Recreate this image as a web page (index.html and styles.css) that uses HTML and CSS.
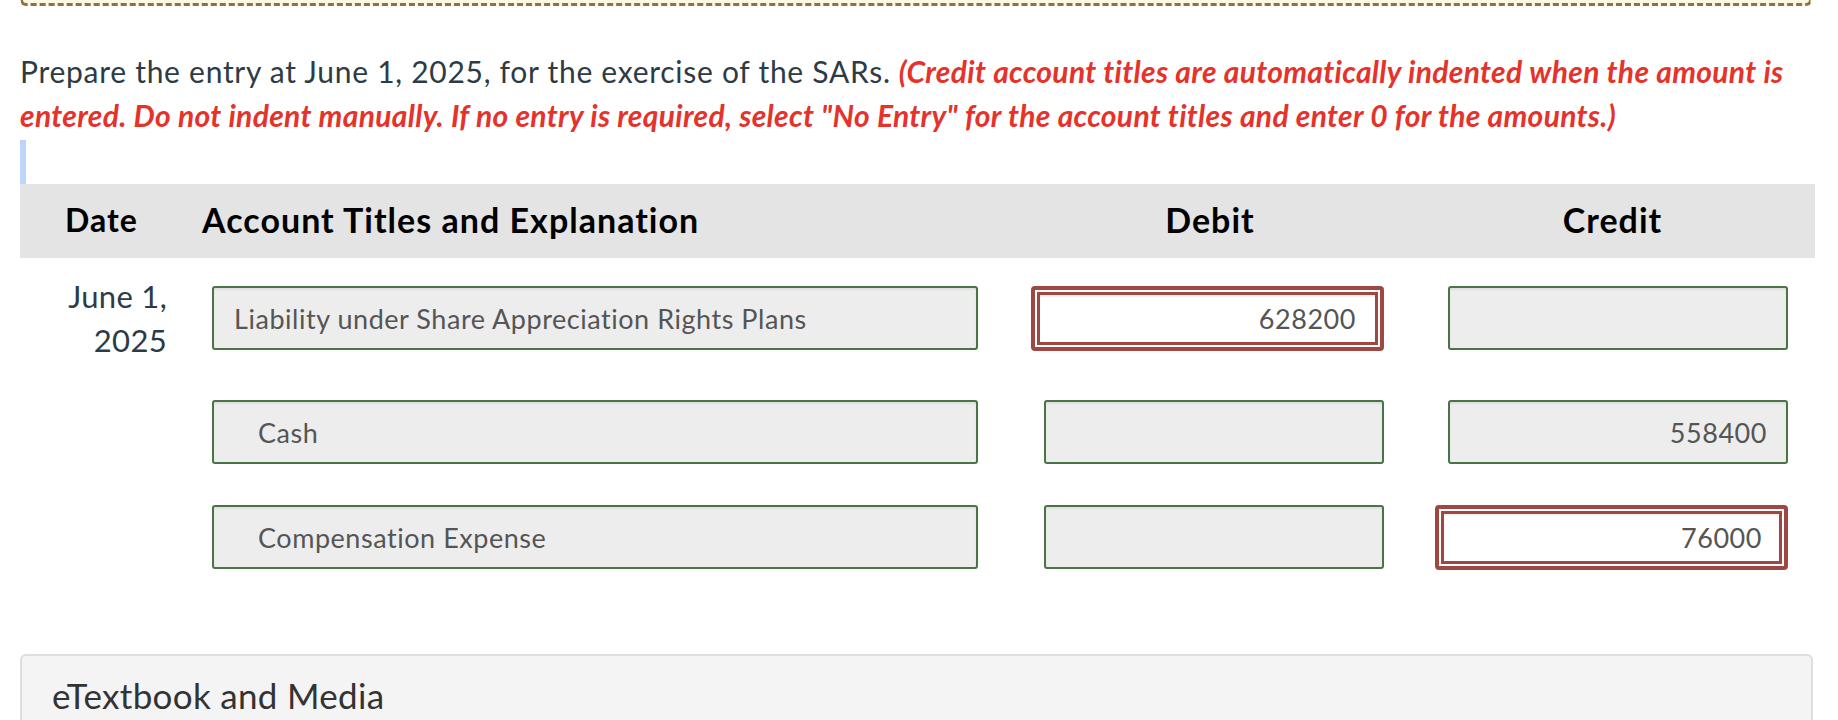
FILE: index.html
```html
<!DOCTYPE html>
<html lang="en">
<head>
<meta charset="utf-8">
<title>Journal entry</title>
<link rel="stylesheet" href="styles.css">
</head>
<body>
<div class="prev-box"></div>
<p class="instructions"><span class="lead">Prepare the entry at June 1, 2025, for the exercise of the SARs.</span> <strong class="note">(Credit account titles are automatically indented when the amount is entered. Do not indent manually. If no entry is required, select "No Entry" for the account titles and enter 0 for the amounts.)</strong></p>
<div class="caret-bar"></div>
<div class="journal">
  <div class="jrow head">
    <div class="c-date">Date</div>
    <div class="c-acct">Account Titles and Explanation</div>
    <div class="c-num">Debit</div>
    <div class="c-num">Credit</div>
  </div>
  <div class="jrow">
    <div class="c-date">June 1,<br>2025</div>
    <div class="c-acct"><input class="field acct" value="Liability under Share Appreciation Rights Plans" readonly></div>
    <div class="c-num"><div class="invalid"><input class="field num" value="628200" readonly></div></div>
    <div class="c-num"><input class="field num" value="" readonly></div>
  </div>
  <div class="jrow">
    <div class="c-date"></div>
    <div class="c-acct"><input class="field acct credit" value="Cash" readonly></div>
    <div class="c-num"><input class="field num" value="" readonly></div>
    <div class="c-num"><input class="field num" value="558400" readonly></div>
  </div>
  <div class="jrow">
    <div class="c-date"></div>
    <div class="c-acct"><input class="field acct credit" value="Compensation Expense" readonly></div>
    <div class="c-num"><input class="field num" value="" readonly></div>
    <div class="c-num"><div class="invalid"><input class="field num" value="76000" readonly></div></div>
  </div>
</div>
<div class="media-box">eTextbook and Media</div>
</body>
</html>
```
FILE: styles.css
```css
* { box-sizing: border-box; }
html, body { margin: 0; padding: 0; background: #fff; }
body {
  padding: 0 23px 0 20px;
  font-family: Lato, "Open Sans", sans-serif;
  color: #2d3b45;
  letter-spacing: 0.02em;
  overflow: hidden;
}
.prev-box {
  height: 6px;
  width: 1792px;
  background: #fcf8e3;
  border: 3px dashed #8b7342;
  border-top: none;
  border-radius: 0 0 8px 8px;
}
.instructions {
  margin: 43px 0 0 0;
  font-size: 30px;
  line-height: 44px;
}
.lead { letter-spacing: 0.024em; }
.note {
  color: #e5322a;
  font-style: italic;
  font-weight: 700;
}
.caret-bar {
  margin-top: 3px;
  width: 6px;
  height: 44px;
  background: #bcd6fb;
}
.journal { width: 1795px; }
.jrow {
  display: grid;
  grid-template-columns: 172px 818px 400px 405px;
  align-items: start;
  padding: 13px 0;
}
.jrow.head {
  background: #e4e4e4;
  height: 74px;
  padding: 0 0 4px 0;
  align-items: center;
  font-weight: 700;
  color: #000;
  font-size: 34px;
  letter-spacing: 0.03em;
}
.head .c-date {
  text-align: center;
  padding: 0 9px 0 0;
  margin: 0;
  font-size: 32px;
  line-height: normal;
}
.head .c-acct { padding-left: 10px; }
.head .c-num { text-align: center; }
.c-date {
  text-align: right;
  padding-right: 25px;
  padding-top: 3px;
  margin-bottom: -3px;
  font-size: 31px;
  line-height: 44px;
}
.jrow:not(.head) .c-acct,
.jrow:not(.head) .c-num {
  padding-top: 15px;
  display: flex;
}
.jrow:not(.head) .c-acct { padding-left: 20px; }
.jrow:not(.head) .c-num { justify-content: flex-end; }
.jrow:not(.head) .c-num:nth-child(3) { padding-right: 26px; }
.jrow:not(.head) .c-num:nth-child(4) { padding-right: 27px; }
.field {
  height: 64px;
  border: 2px solid #4b7446;
  border-radius: 3px;
  background: #ededed;
  box-shadow: inset 0 2px 2px rgba(0,0,0,0.06);
  font-family: Lato, "Open Sans", sans-serif;
  font-size: 27px;
  letter-spacing: 0.02em;
  color: #555;
  margin: 0;
  outline: none;
}
.field.acct {
  width: 766px;
  padding: 0 20px;
}
.field.acct.credit { padding-left: 44px; }
.field.num {
  width: 340px;
  text-align: right;
  padding: 0 19px;
}
.invalid {
  width: 353px;
  height: 65px;
  border: 4px solid #9f4843;
  border-radius: 4px;
  padding: 2px;
  background: #fff;
}
.invalid .field {
  width: 100%;
  height: 100%;
  border: 3px solid #9f4843;
  border-radius: 0;
  background: #fff;
  padding-right: 17px;
}
.jrow:nth-child(2) .invalid .field { padding-right: 19px; }
.media-box {
  margin-top: 71px;
  width: 1793px;
  height: 69px;
  border: 2px solid #dedede;
  border-bottom: none;
  border-radius: 6px 6px 0 0;
  background: #f4f4f4;
  padding: 18px 0 0 30px;
  font-size: 35px;
  color: #333;
}
```
